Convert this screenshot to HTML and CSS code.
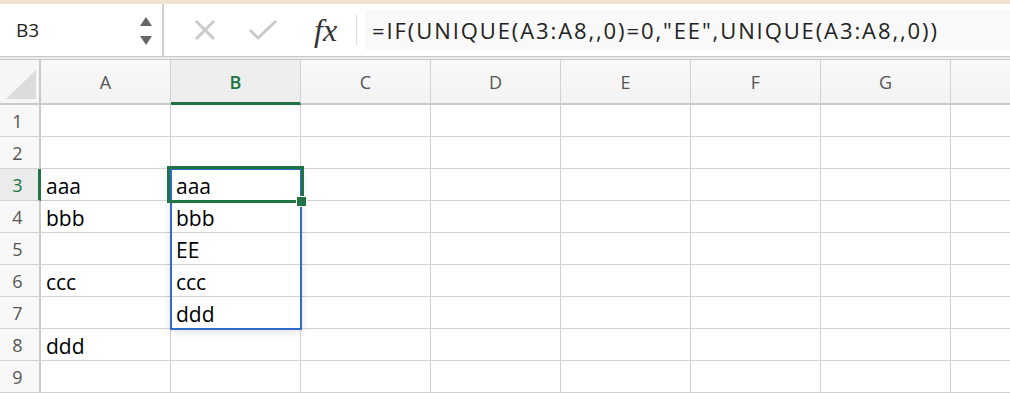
FILE: index.html
```html
<!DOCTYPE html>
<html lang="en">
<head>
  <meta charset="UTF-8">
  <title>Sheet1</title>
  <link rel="stylesheet" href="styles.css">
</head>
<body>

<div class="topline"></div>

<div class="toolbar">
  <div class="namebox">
    <span class="ref">B3</span>
    <span class="spin">
      <svg width="14" height="30" viewBox="0 0 14 30">
        <polygon points="7,1 13,10 1,10" fill="#666"/>
        <polygon points="1,20 13,20 7,29" fill="#666"/>
      </svg>
    </span>
  </div>
  <div class="actions">
    <svg class="btn" width="24" height="24" viewBox="0 0 24 24">
      <path d="M3 3 L21 21 M21 3 L3 21" stroke="#cacaca" stroke-width="3" fill="none"/>
    </svg>
    <svg class="btn" width="30" height="24" viewBox="0 0 30 24">
      <path d="M2 12 L10 20 L28 3" stroke="#cacaca" stroke-width="3" fill="none"/>
    </svg>
    <span class="fx">fx</span>
  </div>
  <div class="formula">=IF(UNIQUE(A3:A8,,0)=0,"EE",UNIQUE(A3:A8,,0))</div>
</div>

<div class="divider"></div>

<div class="sheet">
  <div class="corner"><span class="tri"></span></div>
  <div class="colhead">A</div>
  <div class="colhead active">B</div>
  <div class="colhead">C</div>
  <div class="colhead">D</div>
  <div class="colhead">E</div>
  <div class="colhead">F</div>
  <div class="colhead">G</div>
  <div class="colhead last"></div>

  <div class="rowhead">1</div>
  <div class="cell"></div><div class="cell"></div><div class="cell"></div><div class="cell"></div><div class="cell"></div><div class="cell"></div><div class="cell"></div><div class="cell last"></div>

  <div class="rowhead">2</div>
  <div class="cell"></div><div class="cell"></div><div class="cell"></div><div class="cell"></div><div class="cell"></div><div class="cell"></div><div class="cell"></div><div class="cell last"></div>

  <div class="rowhead active">3</div>
  <div class="cell">aaa</div><div class="cell">aaa</div><div class="cell"></div><div class="cell"></div><div class="cell"></div><div class="cell"></div><div class="cell"></div><div class="cell last"></div>

  <div class="rowhead">4</div>
  <div class="cell">bbb</div><div class="cell">bbb</div><div class="cell"></div><div class="cell"></div><div class="cell"></div><div class="cell"></div><div class="cell"></div><div class="cell last"></div>

  <div class="rowhead">5</div>
  <div class="cell"></div><div class="cell">EE</div><div class="cell"></div><div class="cell"></div><div class="cell"></div><div class="cell"></div><div class="cell"></div><div class="cell last"></div>

  <div class="rowhead">6</div>
  <div class="cell">ccc</div><div class="cell">ccc</div><div class="cell"></div><div class="cell"></div><div class="cell"></div><div class="cell"></div><div class="cell"></div><div class="cell last"></div>

  <div class="rowhead">7</div>
  <div class="cell"></div><div class="cell">ddd</div><div class="cell"></div><div class="cell"></div><div class="cell"></div><div class="cell"></div><div class="cell"></div><div class="cell last"></div>

  <div class="rowhead">8</div>
  <div class="cell">ddd</div><div class="cell"></div><div class="cell"></div><div class="cell"></div><div class="cell"></div><div class="cell"></div><div class="cell"></div><div class="cell last"></div>

  <div class="rowhead">9</div>
  <div class="cell"></div><div class="cell"></div><div class="cell"></div><div class="cell"></div><div class="cell"></div><div class="cell"></div><div class="cell"></div><div class="cell last"></div>

  <!-- spill range and active cell sit over the grid -->
  <div class="spill"></div>
  <div class="selected"><span class="handle"></span></div>
</div>

</body>
</html>
```

FILE: styles.css
```css
body {
  margin: 0;
  background: #fff;
  font-family: 'Open Sans', 'Liberation Sans', sans-serif;
  color: #111;
  overflow: hidden;
}
.topline {
  height: 4px;
  background: #efe4d2;
}
.toolbar {
  display: flex;
  align-items: stretch;
  height: 52px;
  background: #fff;
  border-bottom: 1px solid #c6c6c6;
}
.namebox {
  width: 164px;
  display: flex;
  align-items: center;
  justify-content: space-between;
  padding: 0 9px 0 16px;
  box-sizing: border-box;
  border-right: 2px solid #cfcfcf;
}
.ref {
  font-size: 19px;
  color: #222;
}
.spin svg {
  display: block;
  margin-top: 2px;
}
.actions {
  display: flex;
  align-items: center;
  padding-left: 29px;
}
.btn {
  display: block;
}
.actions .btn + .btn {
  margin-left: 31px;
}
.fx {
  margin-left: 36px;
  font-family: 'Liberation Serif', 'DejaVu Serif', serif;
  font-style: italic;
  font-size: 32px;
  color: #333;
  padding-right: 19px;
  border-right: 1px solid #dcdcdc;
  line-height: 30px;
}
.formula {
  flex: 1;
  display: flex;
  align-items: center;
  margin: 6px 0 6px 8px;
  padding-left: 7px;
  background: #f9f9f9;
  font-size: 22px;
  letter-spacing: 1.9px;
  color: #222;
  white-space: nowrap;
}
.divider {
  height: 2px;
  background: #ececec;
  border-bottom: 1px solid #c9c9c9;
}
.sheet {
  position: relative;
  display: grid;
  grid-template-columns: 41px repeat(7, 130px) 1fr;
  grid-template-rows: 45px repeat(9, 32px);
}
.corner,
.colhead,
.rowhead,
.cell {
  box-sizing: border-box;
  border-right: 1px solid #d2d2d2;
  border-bottom: 1px solid #d2d2d2;
}
.corner {
  background: #f6f6f6;
  position: relative;
  border-right: 2px solid #cacaca;
  border-bottom: 2px solid #cacaca;
}
.tri {
  position: absolute;
  left: 6px;
  top: 10px;
  width: 0;
  height: 0;
  border-left: 30px solid transparent;
  border-bottom: 29px solid #dcdcdc;
}
.colhead {
  background: linear-gradient(#f8f8f8, #f3f3f3);
  border-bottom: 2px solid #cacaca;
  display: flex;
  align-items: center;
  justify-content: center;
  font-size: 18px;
  color: #555;
  padding-top: 1px;
}
.colhead.active {
  background: #eeeeee;
  color: #217346;
  font-weight: 600;
  border-bottom: 3px solid #217346;
}
.rowhead {
  background: #f8f8f8;
  border-right: 2px solid #cacaca;
  display: flex;
  align-items: center;
  justify-content: center;
  font-size: 18px;
  color: #555;
  padding-right: 4px;
}
.rowhead.active {
  background: #ebebeb;
  color: #217346;
  border-right: 3px solid #217346;
  padding-right: 3px;
}
.cell {
  display: flex;
  align-items: center;
  padding: 2px 0 0 5px;
  font-size: 21px;
  color: #000;
  white-space: nowrap;
}
.last {
  border-right: none;
}
.spill {
  position: absolute;
  left: 170px;
  top: 108px;
  width: 132px;
  height: 162px;
  box-sizing: border-box;
  border: 2px solid #2f6bcb;
  box-shadow: 0 2px 8px rgba(0, 0, 0, 0.12);
}
.selected {
  position: absolute;
  left: 167px;
  top: 106px;
  width: 137px;
  height: 37px;
  box-sizing: border-box;
  border: 3px solid #217346;
}
.handle {
  position: absolute;
  right: -6px;
  bottom: -7px;
  width: 9px;
  height: 9px;
  background: #217346;
  border: 1px solid #fff;
}
```
